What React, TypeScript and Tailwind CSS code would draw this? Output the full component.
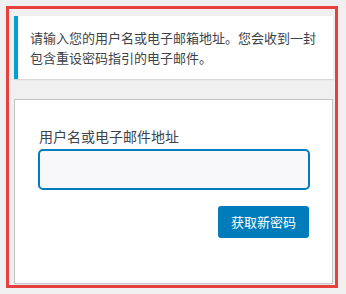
import React from "react";

export default function App() {
  const cjk = { fontFamily: '"Noto Sans CJK SC", "Noto Sans", sans-serif' };
  return (
    <div className="w-[346px] h-[294px] bg-[#f0f0f1] pt-[6px] pl-[6px]" style={cjk}>
      <div className="w-[332px] h-[282px] border-[3px] border-[#e8403f] pl-[5px] pr-[2px] pt-[7px] bg-[#f0f0f1]">
        <div className="bg-white border-l-4 border-[#00a0d2] px-3 py-3 shadow-[0_1px_1px_0_rgba(0,0,0,0.1)] text-[13px] leading-[19.5px] text-[#3c434a] h-[63px]">
          请输入您的用户名或电子邮箱地址。您会收到一封包含重设密码指引的电子邮件。
        </div>
        <div className="mt-5 bg-white border border-[#c3c4c7] shadow-[0_1px_3px_rgba(0,0,0,0.04)] pt-[26px] pl-6 pr-[23px] h-[185px]">
          <label className="block text-[14px] leading-[21px] text-[#3c434a]">用户名或电子邮件地址</label>
          <div className="mt-[2px] -ml-px w-[272px] h-[41px] rounded-[5px] border-2 border-[#007cba] bg-[#f8f8fa]"></div>
          <div className="mt-4 flex justify-end">
            <button className="h-8 w-[91px] rounded-[3px] bg-[#007cba] text-white text-[13px] leading-8">
              获取新密码
            </button>
          </div>
        </div>
      </div>
    </div>
  );
}
